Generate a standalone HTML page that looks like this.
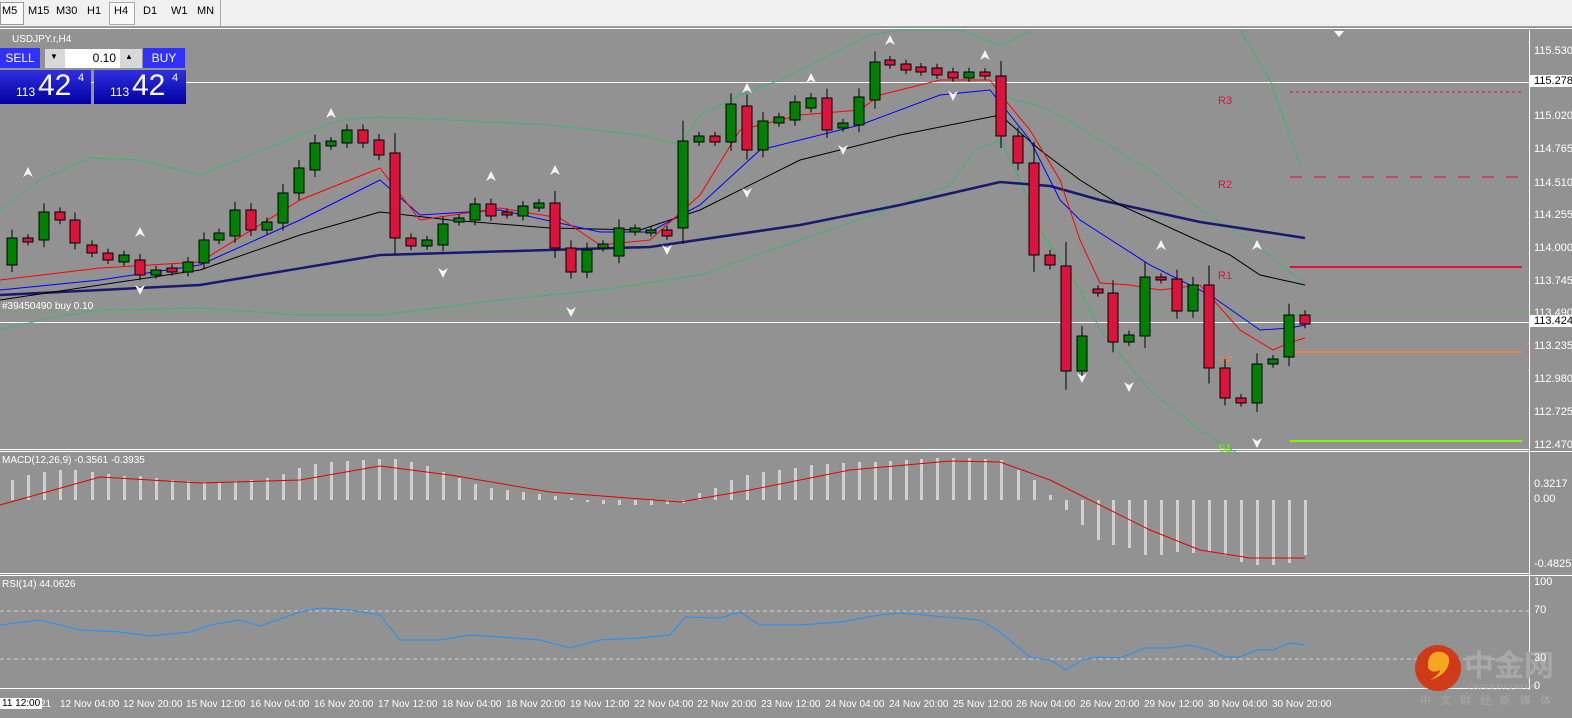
<!DOCTYPE html>
<html><head><meta charset="utf-8"><style>
body{margin:0;width:1572px;height:718px;overflow:hidden;background:#929292;font-family:"Liberation Sans",sans-serif;position:relative}
.tb{position:absolute;left:0;top:0;width:1572px;height:26px;background:#f0f0f0;border-bottom:1px solid #a0a0a0}
.tb span{position:absolute;top:5px;font-size:11px;color:#000}
.ax{position:absolute;font-size:11px;color:#fff;left:1534px}
.tl{position:absolute;top:699px;font-size:10px;color:#fff;white-space:nowrap}
.bx{position:absolute;background:#1010d0;color:#fff}
</style></head><body>
<div class="tb">
<div style="position:absolute;left:0;top:2px;width:22px;height:21px;border:1px solid #999;background:#fafafa"></div>
<span style="left:2px">M5</span><span style="left:28px">M15</span><span style="left:56px">M30</span><span style="left:87px">H1</span>
<div style="position:absolute;left:109px;top:2px;width:24px;height:21px;border:1px solid #aaa;background:#f8f8f8"></div>
<span style="left:114px">H4</span><span style="left:143px">D1</span><span style="left:171px">W1</span><span style="left:197px">MN</span>
<div style="position:absolute;left:220px;top:0;width:1px;height:26px;background:#aaa"></div>
</div>
<div style="position:absolute;left:0;top:28px;width:1572px;height:1px;background:#fff"></div>
<svg id="c" width="1572" height="718" style="position:absolute;left:0;top:0">
<rect x="1529" y="30" width="1" height="660" fill="#fff"/>
<rect x="0" y="449" width="1529" height="1" fill="#fff"/>
<rect x="0" y="451" width="1572" height="1" fill="#fff"/>
<rect x="0" y="573" width="1529" height="1" fill="#fff"/>
<rect x="0" y="575" width="1572" height="1" fill="#fff"/>
<rect x="0" y="688" width="1529" height="1" fill="#fff"/>
<line x1="0" y1="611" x2="1529" y2="611" stroke="#d0d0d0" stroke-dasharray="4,3"/>
<line x1="0" y1="659" x2="1529" y2="659" stroke="#d0d0d0" stroke-dasharray="4,3"/>
<g id="bars"></g>
<polyline fill="none" stroke="#e00000" stroke-width="1" points="0,505 100,477 200,483 300,480 380,466 450,475 550,492 680,502 750,490 850,470 950,461 1000,462 1050,480 1150,530 1200,550 1250,558 1305,558"/>
<polyline fill="none" stroke="#1e90ff" stroke-width="1" points="0,625 40,620 80,630 120,632 150,636 190,632 210,625 240,620 260,626 300,612 320,608 350,610 380,615 400,640 440,640 470,635 500,637 540,640 570,648 600,640 640,638 670,635 685,617 720,618 740,612 760,625 800,625 840,622 880,615 900,613 980,620 1000,632 1030,657 1050,660 1066,670 1082,660 1100,657 1120,658 1145,648 1170,648 1190,645 1210,650 1225,657 1240,657 1257,650 1273,650 1289,643 1305,645"/>
<rect x="0" y="82" width="1529" height="1" fill="#fff"/>
<rect x="0" y="322" width="1529" height="1" fill="#fff"/>
<line x1="0" y1="312" x2="1529" y2="312" stroke="#60b060" stroke-dasharray="8,3,2,3"/>
<line x1="1290" y1="92" x2="1522" y2="92" stroke="#dc143c" stroke-dasharray="3,3"/>
<line x1="1290" y1="177" x2="1522" y2="177" stroke="#dc143c" stroke-dasharray="12,12"/>
<line x1="1290" y1="267" x2="1522" y2="267" stroke="#dc143c" stroke-width="2"/>
<line x1="1290" y1="352" x2="1522" y2="352" stroke="#f08050" stroke-width="2"/>
<line x1="1290" y1="441" x2="1522" y2="441" stroke="#7cfc00" stroke-width="2"/>
<polyline fill="none" stroke="#3cb371" points="0,210 40,180 90,158 140,160 200,175 250,155 300,135 340,120 380,117 450,120 550,125 640,135 680,145 700,115 740,95 780,80 830,55 870,35 900,30 960,30 1000,45 1030,32"/>
<polyline fill="none" stroke="#3cb371" points="1240,30 1270,80 1300,165"/>
<polyline fill="none" stroke="#3cb371" points="0,330 50,318 100,310 200,308 300,315 380,315 500,300 600,290 700,275 800,240 900,205 950,185 975,150 1000,140 1020,180 1040,230 1080,290 1100,330 1150,390 1200,430 1240,455"/>
<polyline fill="none" stroke="#3cb371" points="1000,95 1050,110 1100,140 1150,170 1200,210 1250,240 1300,280"/>
<polyline fill="none" stroke="#191970" stroke-width="2.5" points="0,295 200,285 380,255 650,247 800,225 900,205 1000,182 1050,186 1100,200 1200,222 1305,238"/>
<polyline fill="none" stroke="#000" points="0,300 100,285 200,270 300,235 380,212 450,220 550,228 640,230 700,210 800,160 900,135 1000,115 1040,150 1080,180 1120,205 1230,255 1260,275 1305,285"/>
<polyline fill="none" stroke="#0000ff" points="0,290 100,280 200,265 300,220 380,180 420,215 500,210 600,232 650,232 700,205 760,150 860,125 940,95 990,90 1030,140 1060,200 1080,220 1150,265 1210,295 1260,330 1290,328 1305,325"/>
<polyline fill="none" stroke="#ff0000" points="0,280 100,268 200,262 300,200 380,168 420,220 500,208 560,218 600,245 650,240 700,195 740,130 800,115 860,110 880,95 940,80 990,80 1005,100 1030,130 1060,180 1080,240 1100,283 1130,285 1160,290 1200,285 1240,330 1273,350 1289,343 1305,338"/>
<g id="cd"></g>
<g id="fr" fill="#f4f4f4"></g>
<text x="1218" y="104" fill="#dc143c" font-size="11" font-family="Liberation Sans">R3</text>
<text x="1218" y="188" fill="#dc143c" font-size="11" font-family="Liberation Sans">R2</text>
<text x="1218" y="279" fill="#dc143c" font-size="11" font-family="Liberation Sans">R1</text>
<text x="1218" y="364" fill="#f08050" font-size="11" font-family="Liberation Sans">PP</text>
<text x="1218" y="452" fill="#7cfc00" font-size="11" font-family="Liberation Sans">S1</text>
<text x="2" y="309" fill="#fff" font-size="10" font-family="Liberation Sans">#39450490 buy 0.10</text>
<text x="2" y="463" fill="#fff" font-size="10" font-family="Liberation Sans">MACD(12,26,9) -0.3561 -0.3935</text>
<text x="2" y="587" fill="#fff" font-size="10" font-family="Liberation Sans">RSI(14) 44.0626</text>
<text x="12" y="42" fill="#fff" font-size="10" font-family="Liberation Sans">USDJPY.r,H4</text>
<path d="M1334 31 L1344 31 L1339 37Z" fill="#fff"/>
<circle cx="1438" cy="668" r="23" fill="#d03a18"/>
<path d="M1428 662 q2 -12 14 -10 q10 3 6 14 q-4 10 -18 14 q10 -6 10 -10 q-8 4 -12 -2z" fill="#f5a623"/>
<text x="1464" y="676" fill="#a8a8a8" font-size="30" font-weight="bold" font-family="Noto Sans CJK SC,sans-serif">中金网</text>
<text x="1468" y="690" fill="#a8a8a8" font-size="8" font-family="Liberation Sans">CNGOLD.COM.CN</text>
<text x="1420" y="704" fill="#a8a8a8" font-size="11" letter-spacing="9" font-family="Noto Sans CJK SC,sans-serif">中文财经新媒体</text>
</svg>
<div class="bx" style="left:0;top:48px;width:40px;height:20px;font-size:12px;line-height:20px;text-align:center;background:#3030ff">SELL</div>
<div style="position:absolute;left:45px;top:49px;width:97px;height:19px;background:#d8d8d8"></div>
<div style="position:absolute;left:65px;top:49px;width:55px;height:19px;background:#fff;font-size:12px;line-height:19px;text-align:right;padding-right:4px;box-sizing:border-box">0.10</div>
<div style="position:absolute;left:50px;top:52px;font-size:8px">▼</div><div style="position:absolute;left:125px;top:52px;font-size:8px">▲</div>
<div class="bx" style="left:143px;top:48px;width:42px;height:20px;font-size:12px;line-height:20px;text-align:center;background:#3030ff">BUY</div>
<div class="bx" style="left:0;top:70px;width:91px;height:34px;background:linear-gradient(#3030e0,#0000a0)"><span style="position:absolute;left:16px;top:15px;font-size:12px">113</span><span style="position:absolute;left:38px;top:-1px;font-size:30px">42</span><span style="position:absolute;left:78px;top:2px;font-size:11px">4</span></div>
<div class="bx" style="left:94px;top:70px;width:92px;height:34px;background:linear-gradient(#3030e0,#0000a0)"><span style="position:absolute;left:16px;top:15px;font-size:12px">113</span><span style="position:absolute;left:38px;top:-1px;font-size:30px">42</span><span style="position:absolute;left:78px;top:2px;font-size:11px">4</span></div>
<div class="ax" style="top:45px">115.530</div>
<div class="ax" style="top:75px;left:1530px;background:#fff;color:#000;padding:0 4px">115.278</div>
<div class="ax" style="top:110px">115.020</div>
<div class="ax" style="top:143px">114.765</div>
<div class="ax" style="top:177px">114.510</div>
<div class="ax" style="top:209px">114.255</div>
<div class="ax" style="top:242px">114.000</div>
<div class="ax" style="top:275px">113.745</div>
<div class="ax" style="top:307px">113.490</div>
<div class="ax" style="top:315px;left:1530px;background:#fff;color:#000;padding:0 4px">113.424</div>
<div class="ax" style="top:340px">113.235</div>
<div class="ax" style="top:373px">112.980</div>
<div class="ax" style="top:406px">112.725</div>
<div class="ax" style="top:439px">112.470</div>
<div class="ax" style="top:478px">0.3217</div>
<div class="ax" style="top:493px">0.00</div>
<div class="ax" style="top:558px">-0.4825</div>
<div class="ax" style="top:576px">100</div>
<div class="ax" style="top:604px">70</div>
<div class="ax" style="top:652px">30</div>
<div class="ax" style="top:680px">0</div>
<div class="tl" style="left:0;top:698px;background:#fff;color:#000;padding:0 2px">11 12:00</div>
<div class="tl" style="left:40px">21</div>
<div class="tl" style="left:60px">12 Nov 04:00</div><div class="tl" style="left:123px">12 Nov 20:00</div><div class="tl" style="left:186px">15 Nov 12:00</div><div class="tl" style="left:250px">16 Nov 04:00</div><div class="tl" style="left:314px">16 Nov 20:00</div><div class="tl" style="left:378px">17 Nov 12:00</div><div class="tl" style="left:442px">18 Nov 04:00</div><div class="tl" style="left:506px">18 Nov 20:00</div><div class="tl" style="left:570px">19 Nov 12:00</div><div class="tl" style="left:634px">22 Nov 04:00</div><div class="tl" style="left:697px">22 Nov 20:00</div><div class="tl" style="left:761px">23 Nov 12:00</div><div class="tl" style="left:825px">24 Nov 04:00</div><div class="tl" style="left:889px">24 Nov 20:00</div><div class="tl" style="left:953px">25 Nov 12:00</div><div class="tl" style="left:1016px">26 Nov 04:00</div><div class="tl" style="left:1080px">26 Nov 20:00</div><div class="tl" style="left:1144px">29 Nov 12:00</div><div class="tl" style="left:1208px">30 Nov 04:00</div><div class="tl" style="left:1272px">30 Nov 20:00</div>
<script>
var C=[[12,238,265,'g'],[28,238,242,'r'],[44,212,240,'g'],[60,212,220,'r'],[75,220,243,'r'],[92,245,253,'r'],[108,253,260,'r'],[124,255,262,'g'],[140,260,275,'r'],[156,270,275,'g'],[172,268,272,'r'],[188,262,272,'g'],[204,240,263,'g'],[219,233,240,'g'],[235,210,236,'g'],[251,210,230,'r'],[267,222,230,'g'],[283,193,223,'g'],[299,168,193,'g'],[315,143,170,'g'],[331,141,146,'g'],[347,130,143,'g'],[363,130,143,'r'],[379,140,155,'r'],[395,153,238,'r'],[411,238,246,'r'],[427,240,246,'g'],[443,224,245,'g'],[459,218,222,'g'],[475,204,220,'g'],[491,204,216,'r'],[507,212,215,'r'],[523,206,216,'g'],[539,203,208,'g'],[555,203,248,'r'],[571,248,272,'r'],[587,250,272,'g'],[603,244,248,'g'],[619,228,256,'g'],[635,228,232,'g'],[651,230,233,'g'],[667,230,236,'r'],[683,141,228,'g'],[699,136,142,'g'],[715,136,142,'r'],[731,104,142,'g'],[747,106,150,'r'],[763,121,150,'g'],[779,117,123,'g'],[795,102,120,'g'],[811,98,108,'g'],[827,98,130,'r'],[843,123,128,'g'],[859,97,125,'g'],[875,62,100,'g'],[890,60,65,'r'],[906,64,70,'r'],[921,67,72,'r'],[937,68,75,'r'],[953,72,78,'r'],[969,72,78,'g'],[985,72,76,'r'],[1001,76,136,'r'],[1018,136,163,'r'],[1034,163,255,'r'],[1050,255,265,'r'],[1066,266,371,'r'],[1082,336,371,'g'],[1098,289,293,'r'],[1113,293,342,'r'],[1129,335,342,'g'],[1145,277,336,'g'],[1161,277,280,'r'],[1177,279,311,'r'],[1193,285,311,'g'],[1209,285,368,'r'],[1225,368,398,'r'],[1241,398,403,'r'],[1257,364,403,'g'],[1273,359,364,'g'],[1289,315,357,'g'],[1305,315,324,'r']];
var H=[480,475,472,470,470,472,474,476,476,478,480,481,482,482,481,480,478,474,468,464,462,461,460,459,459,462,466,472,478,484,488,490,492,494,496,498,502,504,505,505,505,504,503,493,488,480,475,472,470,468,465,464,463,462,462,461,460,459,458,458,458,459,460,470,480,495,510,525,540,545,548,555,555,552,553,552,555,562,565,565,563,555,553];
var s='',b='',f='';
C.forEach(function(c,i){var x=c[0],t=c[1],bt=c[2];var w1=Math.max(3,(bt-t)*0.2+3),w2=Math.max(3,(bt-t)*0.15+3);
s+='<line x1="'+x+'" y1="'+(t-w1)+'" x2="'+x+'" y2="'+(bt+w2)+'" stroke="#000"/>';
s+='<rect x="'+(x-5)+'" y="'+t+'" width="10" height="'+Math.max(2,bt-t)+'" fill="'+(c[3]=='g'?'#008000':'#dc143c')+'" stroke="#000"/>';
var h=H[i]||500;b+='<rect x="'+(x-1)+'" y="'+Math.min(h,500)+'" width="3" height="'+Math.max(1,Math.abs(h-500))+'" fill="#d0d0d0"/>';});
[[28,172,0],[140,232,0],[140,290,1],[331,113,0],[443,273,1],[491,176,0],[555,170,0],[571,312,1],[667,250,1],[747,88,0],[747,193,1],[811,78,0],[843,150,1],[890,40,0],[953,96,1],[985,55,0],[1082,378,1],[1129,387,1],[1161,245,0],[1257,245,0],[1257,443,1]].forEach(function(a){
var x=a[0],y=a[1];f+=a[2]?'<path d="M'+(x-5)+' '+(y-5)+' L'+x+' '+(y+5)+' L'+(x+5)+' '+(y-5)+' L'+x+' '+(y-2)+'Z"/>':'<path d="M'+(x-5)+' '+(y+5)+' L'+x+' '+(y-5)+' L'+(x+5)+' '+(y+5)+' L'+x+' '+(y+2)+'Z"/>';});
document.getElementById('cd').innerHTML=s;document.getElementById('bars').innerHTML=b;document.getElementById('fr').innerHTML=f;
</script>
</body></html>
